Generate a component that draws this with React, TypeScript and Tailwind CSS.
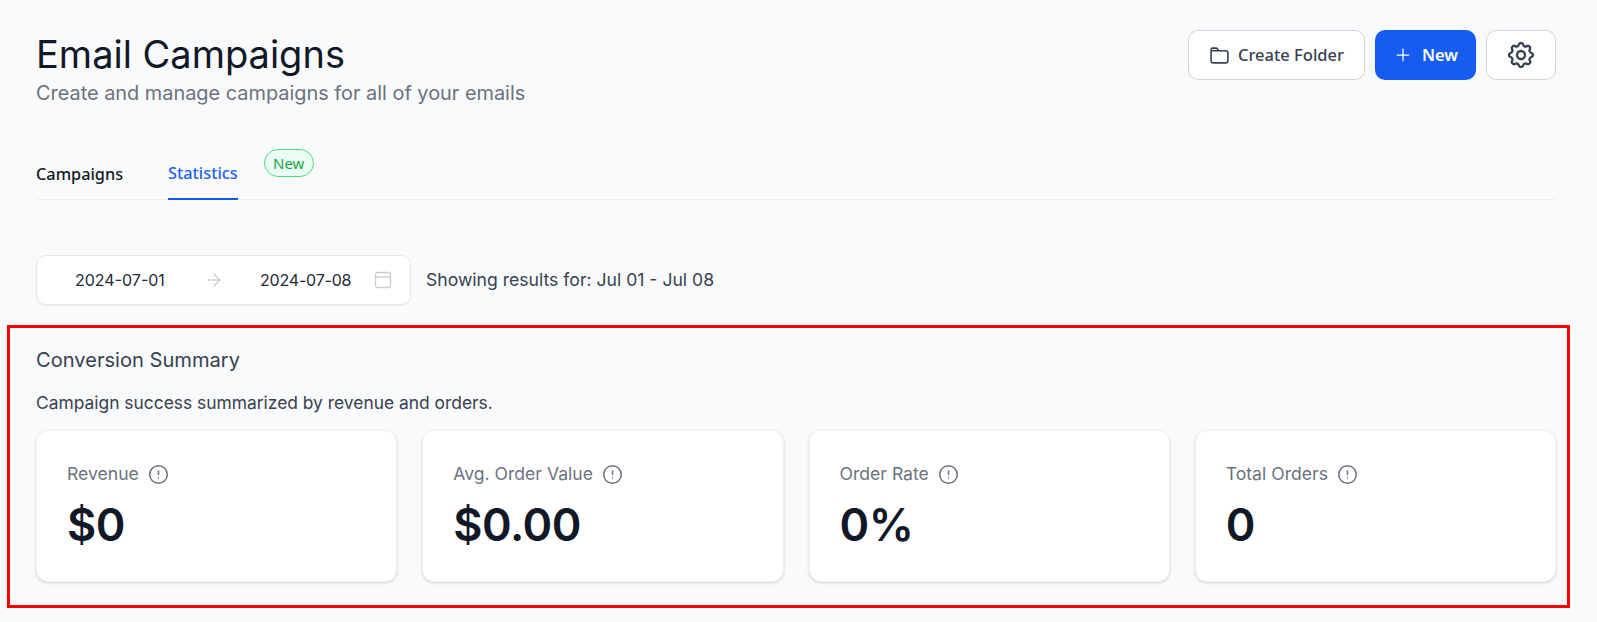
import React from 'react';
import { ArrowRight, CircleAlert, Plus } from 'lucide-react';
import { TbSettings } from 'react-icons/tb';

const stats = [
  { label: 'Revenue', value: '$0' },
  { label: 'Avg. Order Value', value: '$0.00' },
  { label: 'Order Rate', value: '0%' },
  { label: 'Total Orders', value: '0' },
];

export default function App() {
  return (
    <div className="min-h-[622px] bg-[#f9fafb] pt-[30px] font-['Inter',sans-serif] overflow-hidden">
      <div className="pl-[36px] pr-[41px]">
        <div className="flex justify-between items-start">
          <div>
            <h1 className="mt-[2px] text-[38px] leading-[44px] font-normal text-[#111827]">Email Campaigns</h1>
            <p className="mt-[3px] text-[19.9px] leading-[28px] text-[#6b7280]">Create and manage campaigns for all of your emails</p>
          </div>
          <div className="flex gap-[10px]">
            <button className="h-[50px] w-[177px] flex items-center justify-center gap-[8px] rounded-[10px] border border-[#d1d5db] bg-white text-[#374151] text-[16.5px] font-medium font-['Noto_Sans',sans-serif]">
              <svg width="21" height="21" viewBox="0 0 20 20" fill="none" stroke="currentColor" strokeWidth="1.5" strokeLinecap="round" strokeLinejoin="round">
                <path d="M2 6V4.5A1.5 1.5 0 0 1 3.5 3h3.2a1.5 1.5 0 0 1 1.2.6L9.2 5.5H16A2 2 0 0 1 18 7.500V15a2 2 0 0 1-2 2H4a2 2 0 0 1-2-2V6.500A1 1 0 0 1 3 5.500H9.200" />
              </svg>
              Create Folder
            </button>
            <button className="h-[50px] w-[101px] flex items-center justify-center gap-[9px] rounded-[10px] bg-[#175cf0] text-white text-[16.5px] font-semibold font-['Noto_Sans',sans-serif]">
              <Plus size={20} strokeWidth={1.5} /> New
            </button>
            <button className="h-[50px] w-[70px] flex items-center justify-center rounded-[10px] border border-[#d1d5db] bg-white text-[#374151]">
              <TbSettings size={32} strokeWidth={1.75} />
            </button>
          </div>
        </div>

        <div className="mt-[43px] flex h-[50px] items-stretch border-b border-[#eceef1] font-['Noto_Sans',sans-serif] text-[16.3px] font-medium">
          <div className="flex items-center pb-[1px] text-[#111827] mr-[45px]">Campaigns</div>
          <div className="flex items-center pb-[1px] text-[#2563eb] border-b-2 border-[#175cf0] -mb-[1px]">Statistics</div>
          <span className="ml-[26px] -mt-[1px] h-[28px] w-[50px] flex items-center justify-center rounded-full border border-[#4ade80] bg-[#ecfdf3] text-[15px] font-normal text-[#16a34a]">New</span>
        </div>

        <div className="mt-[55px] flex items-center gap-[15px]">
          <div className="h-[50px] w-[375px] flex items-center rounded-[10px] border border-[#e5e7eb] bg-white text-[16px] text-[#1f2937] shadow-xs">
            <span className="ml-[38px] w-[95px]">2024-07-01</span>
            <ArrowRight size={20} strokeWidth={1.25} className="ml-[34px] text-[#b4b8bf]" />
            <span className="ml-[36px] w-[95px] tracking-[-0.2px]">2024-07-08</span>
            <svg width="18" height="18" viewBox="0 0 18 18" fill="none" stroke="#c9ccd1" strokeWidth="1.3" className="ml-[19px]">
              <rect x="1.500" y="1.500" width="15" height="15" rx="2" />
              <path d="M1.500 6h15" />
            </svg>
          </div>
          <span className="text-[17.6px] text-[#374151]">Showing results for: Jul 01 - Jul 08</span>
        </div>
      </div>

      <section className="mt-[20px] ml-[7px] w-[1563px] h-[283px] border-[3px] border-[#ff0000] pl-[26px] pr-[11px] pt-[18px]">
        <h2 className="text-[20.1px] leading-[28px] font-normal text-[#374151]">Conversion Summary</h2>
        <p className="mt-[17px] text-[17.4px] leading-[24px] text-[#374151]">Campaign success summarized by revenue and orders.</p>
        <div className="mt-[15px] grid grid-cols-4 gap-[25px]">
          {stats.map((s) => (
            <div key={s.label} className="h-[152px] rounded-[12px] border border-[#f0f1f3] bg-white pl-[30px] pt-[31px] shadow-[0_1px_3px_rgba(0,0,0,0.16)]">
              <div className="flex items-center gap-[9px] text-[17.6px] leading-[24px] text-[#6b7280]">
                {s.label}
                <CircleAlert size={21} strokeWidth={1.75} />
              </div>
              <div className="mt-[11px] text-[45px] leading-[56px] font-semibold tracking-[-0.5px] text-[#111827]">{s.value}</div>
            </div>
          ))}
        </div>
      </section>
    </div>
  );
}
